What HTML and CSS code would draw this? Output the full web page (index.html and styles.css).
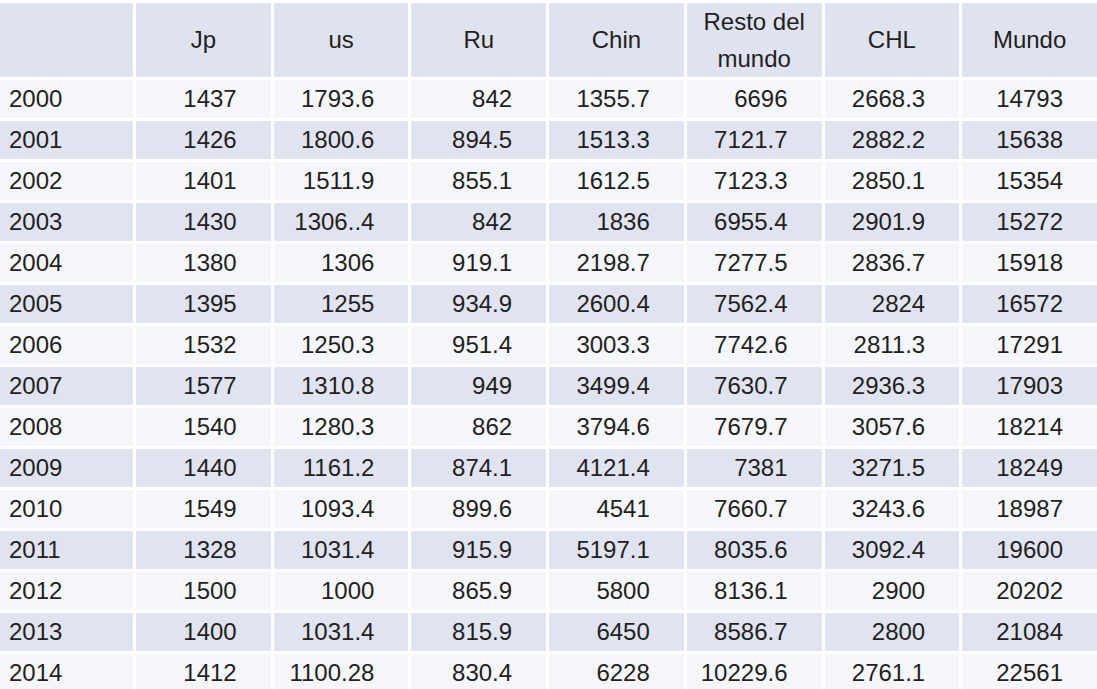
FILE: index.html
```html
<!DOCTYPE html>
<html>
<head>
<meta charset="utf-8">
<link rel="stylesheet" href="styles.css">
</head>
<body>
<table class="data">
  <colgroup>
    <col class="c-year"><col><col><col><col><col><col><col>
  </colgroup>
  <thead>
    <tr>
      <th></th><th>Jp</th><th>us</th><th>Ru</th><th>Chin</th><th class="two">Resto del<br>mundo</th><th>CHL</th><th>Mundo</th>
    </tr>
  </thead>
  <tbody>
    <tr><td>2000</td><td>1437</td><td>1793.6</td><td>842</td><td>1355.7</td><td>6696</td><td>2668.3</td><td>14793</td></tr>
    <tr><td>2001</td><td>1426</td><td>1800.6</td><td>894.5</td><td>1513.3</td><td>7121.7</td><td>2882.2</td><td>15638</td></tr>
    <tr><td>2002</td><td>1401</td><td>1511.9</td><td>855.1</td><td>1612.5</td><td>7123.3</td><td>2850.1</td><td>15354</td></tr>
    <tr><td>2003</td><td>1430</td><td>1306..4</td><td>842</td><td>1836</td><td>6955.4</td><td>2901.9</td><td>15272</td></tr>
    <tr><td>2004</td><td>1380</td><td>1306</td><td>919.1</td><td>2198.7</td><td>7277.5</td><td>2836.7</td><td>15918</td></tr>
    <tr><td>2005</td><td>1395</td><td>1255</td><td>934.9</td><td>2600.4</td><td>7562.4</td><td>2824</td><td>16572</td></tr>
    <tr><td>2006</td><td>1532</td><td>1250.3</td><td>951.4</td><td>3003.3</td><td>7742.6</td><td>2811.3</td><td>17291</td></tr>
    <tr><td>2007</td><td>1577</td><td>1310.8</td><td>949</td><td>3499.4</td><td>7630.7</td><td>2936.3</td><td>17903</td></tr>
    <tr><td>2008</td><td>1540</td><td>1280.3</td><td>862</td><td>3794.6</td><td>7679.7</td><td>3057.6</td><td>18214</td></tr>
    <tr><td>2009</td><td>1440</td><td>1161.2</td><td>874.1</td><td>4121.4</td><td>7381</td><td>3271.5</td><td>18249</td></tr>
    <tr><td>2010</td><td>1549</td><td>1093.4</td><td>899.6</td><td>4541</td><td>7660.7</td><td>3243.6</td><td>18987</td></tr>
    <tr><td>2011</td><td>1328</td><td>1031.4</td><td>915.9</td><td>5197.1</td><td>8035.6</td><td>3092.4</td><td>19600</td></tr>
    <tr><td>2012</td><td>1500</td><td>1000</td><td>865.9</td><td>5800</td><td>8136.1</td><td>2900</td><td>20202</td></tr>
    <tr><td>2013</td><td>1400</td><td>1031.4</td><td>815.9</td><td>6450</td><td>8586.7</td><td>2800</td><td>21084</td></tr>
    <tr><td>2014</td><td>1412</td><td>1100.28</td><td>830.4</td><td>6228</td><td>10229.6</td><td>2761.1</td><td>22561</td></tr>
  </tbody>
</table>
</body>
</html>
```

FILE: styles.css
```css
html, body {
  margin: 0;
  padding: 0;
  background: #ffffff;
  overflow: hidden;
}

.data {
  margin-left: -3px;
  width: 1103px;
  table-layout: fixed;
  border-collapse: separate;
  border-spacing: 3px;
  font-family: "Liberation Sans", Arial, sans-serif;
  font-size: 24px;
  color: #231f20;
}

.c-year {
  width: 133px;
}

.data th {
  height: 73px;
  padding: 0;
  background: #dfe2ef;
  font-weight: normal;
  text-align: center;
  vertical-align: middle;
  line-height: 28px;
}

.data th.two {
  line-height: 37px;
}

.data td {
  height: 38px;
  line-height: 28px;
  padding: 0 34px 0 0;
  text-align: right;
  vertical-align: middle;
  background: #f5f6fa;
  white-space: nowrap;
}

.data td:first-child {
  text-align: left;
  padding: 0 0 0 9px;
}

.data tbody tr:nth-child(even) td {
  background: #e0e3f0;
}
```
